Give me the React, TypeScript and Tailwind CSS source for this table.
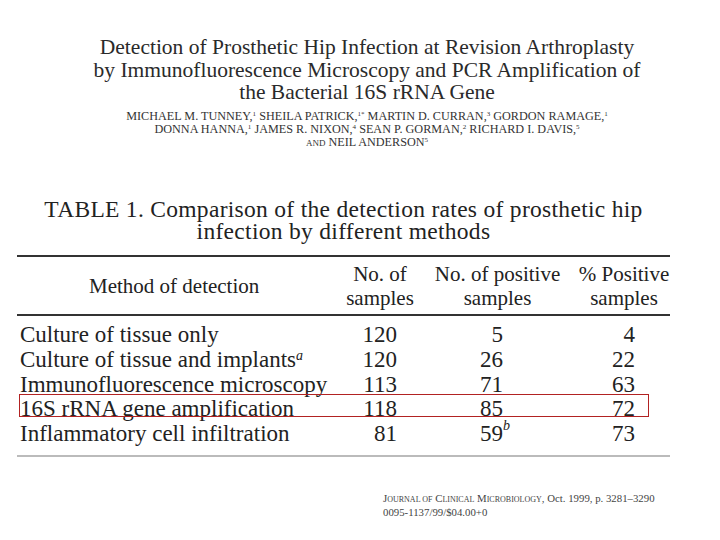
import React from "react";

const serif = { fontFamily: '"Liberation Serif", "Times New Roman", serif' };

const Sup = ({ children }: { children: React.ReactNode }) => (
  <sup className="text-[7px] leading-none">{children}</sup>
);

const rows: { m: React.ReactNode; n: string; p: React.ReactNode; pct: string; hl?: boolean }[] = [
  { m: "Culture of tissue only", n: "120", p: "5", pct: "4" },
  {
    m: (
      <>
        Culture of tissue and implants<sup className="italic text-[14px] leading-none">a</sup>
      </>
    ),
    n: "120",
    p: "26",
    pct: "22",
  },
  { m: "Immunofluorescence microscopy", n: "113", p: "71", pct: "63" },
  { m: "16S rRNA gene amplification", n: "118", p: "85", pct: "72", hl: true },
  {
    m: "Inflammatory cell infiltration",
    n: "81",
    p: (
      <span className="relative">
        59
        <span className="absolute left-full top-[-2px] italic text-[14px] leading-[14px]">b</span>
      </span>
    ),
    pct: "73",
  },
];

export default function App() {
  return (
    <div className="w-[720px] h-[540px] bg-white text-[#222] overflow-hidden" style={serif}>
      {/* Article header */}
      <div className="pt-[36px] pl-[14px] text-center">
        <div className="text-[21.5px] leading-[22.5px] text-[#2a2a2a]">
          <div>Detection of Prosthetic Hip Infection at Revision Arthroplasty</div>
          <div>by Immunofluorescence Microscopy and PCR Amplification of</div>
          <div>the Bacterial 16S rRNA Gene</div>
        </div>
        <div className="mt-[6px] text-[12.2px] leading-[13px] text-[#333]">
          <div>
            MICHAEL M. TUNNEY,<Sup>1</Sup> SHEILA PATRICK,<Sup>1*</Sup> MARTIN D. CURRAN,<Sup>3</Sup> GORDON RAMAGE,<Sup>1</Sup>
          </div>
          <div>
            DONNA HANNA,<Sup>1</Sup> JAMES R. NIXON,<Sup>4</Sup> SEAN P. GORMAN,<Sup>2</Sup> RICHARD I. DAVIS,<Sup>5</Sup>
          </div>
          <div>
            <span className="text-[9px]">AND</span> NEIL ANDERSON<Sup>5</Sup>
          </div>
        </div>
      </div>

      {/* Table caption */}
      <div className="mt-[48px] ml-[17px] w-[653px] text-center text-[23.5px] tracking-[0.3px] leading-[22.5px] text-[#222] whitespace-nowrap">
        <div>TABLE 1. Comparison of the detection rates of prosthetic hip</div>
        <div>infection by different methods</div>
      </div>

      {/* Table */}
      <div className="mt-[12.5px] ml-[17px] w-[653px]">
        <div className="border-t-[2px] border-[#333]" />
        <div className="grid grid-cols-[313px_100px_135px_105px] h-[57px] items-center text-[21px] leading-[24px] text-[#222]">
          <div className="pl-[72px]">Method of detection</div>
          <div className="text-center">
            <div>No. of</div>
            <div>samples</div>
          </div>
          <div className="text-center">
            <div>No. of positive</div>
            <div>samples</div>
          </div>
          <div className="text-center pl-[13px]">
            <div>% Positive</div>
            <div>samples</div>
          </div>
        </div>
        <div className="border-t-[2px] border-[#333]" />
        <div className="pt-[7px] pb-[8px] text-[23px] leading-[24.75px] text-[#222]">
          {rows.map((r, i) => (
            <div key={i} className="relative grid grid-cols-[313px_67px_106px_132px] items-center">
              {r.hl && (
                <div className="absolute left-[2px] top-[-3px] w-[630px] h-[23px] border border-[#b22222]" />
              )}
              <div className="pl-[3px] whitespace-nowrap">{r.m}</div>
              <div className="text-right">{r.n}</div>
              <div className="text-right">{r.p}</div>
              <div className="text-right">{r.pct}</div>
            </div>
          ))}
        </div>
        <div className="border-t-[2px] border-[#bbb]" />
      </div>

      {/* Footer */}
      <div className="mt-[35px] ml-[383px] text-[10.8px] leading-[12px] text-[#444]">
        <div>
          J<span className="text-[8px]">OURNAL OF</span> C<span className="text-[8px]">LINICAL</span> M
          <span className="text-[8px]">ICROBIOLOGY</span>, Oct. 1999, p. 3281–3290
        </div>
        <div>0095-1137/99/$04.00+0</div>
      </div>
    </div>
  );
}
